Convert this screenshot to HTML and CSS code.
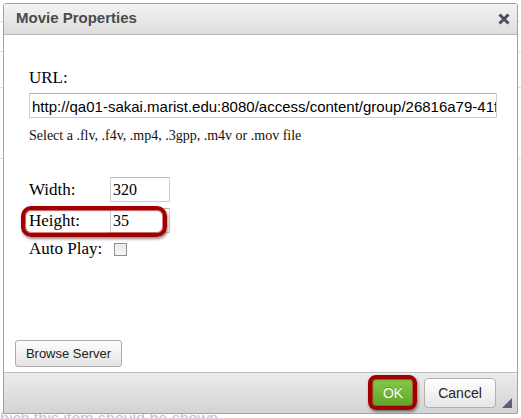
FILE: index.html
```html
<!DOCTYPE html>
<html>
<head>
<meta charset="utf-8">
<title>Movie Properties</title>
<link rel="stylesheet" href="styles.css">
</head>
<body>
<div class="page">
  <div class="backdrop">
    <div class="bg-row r1"></div>
    <div class="bg-row r2"></div>
    <div class="bg-row r3"></div>
    <div class="bg-row r4"></div>
    <div class="bg-text">hich this item should be shown</div>
  </div>

  <div class="dialog">
    <div class="dlg-head">
      <span class="dlg-title">Movie Properties</span>
      <svg class="dlg-close" width="12" height="12" viewBox="0 0 12 12"><path d="M1.5 1.5L10.5 10.5M10.5 1.5L1.5 10.5" stroke="#4e4e5e" stroke-width="3" stroke-linecap="butt"/></svg>
    </div>
    <div class="dlg-body">
      <div class="fields">
        <div class="url-label">URL:</div>
        <div class="url-input">http://qa01-sakai.marist.edu:8080/access/content/group/26816a79-41f9-4b2e-a0c1/movie.mp4</div>
        <div class="help">Select a .flv, .f4v, .mp4, .3gpp, .m4v or .mov file</div>
        <div class="dims">
          <div class="lbl">Width:</div>
          <div class="small-input">320</div>
          <div class="lbl">Height:</div>
          <div class="small-input">35</div>
          <div class="lbl lbl-short">Auto Play:</div>
          <div><span class="checkbox"></span></div>
        </div>
      </div>
      <button class="btn browse">Browse Server</button>
    </div>
    <div class="dlg-foot">
      <button class="btn ok">OK</button>
      <button class="btn cancel">Cancel</button>
      <svg class="grip" width="10" height="10" viewBox="0 0 10 10"><polygon points="10,0 10,10 0,10" fill="#5b5f78"/></svg>
    </div>
  </div>

  <div class="mark mark-height"></div>
  <div class="mark mark-ok"></div>
</div>
</body>
</html>
```

FILE: styles.css
```css
html, body {
  margin: 0;
  padding: 0;
  background: #fff;
}

.page {
  position: relative;
  width: 521px;
  height: 418px;
  overflow: hidden;
}

.backdrop {
  height: 418px;
  display: flex;
  flex-direction: column;
  overflow: hidden;
}

.bg-row {
  border-bottom: 1px solid #dedede;
}
.r1 { height: 21px; }
.r2 { height: 29px; }
.r3 { height: 35px; }
.r4 { height: 70px; }

.bg-text {
  margin-top: auto;
  margin-bottom: -10px;
  height: 18px;
  line-height: 18px;
  font-family: "Liberation Sans", Arial, sans-serif;
  font-size: 16px;
  color: #9fd0e6;
  white-space: nowrap;
}

.dialog {
  position: absolute;
  left: 3px;
  top: 3px;
  width: 515px;
  height: 411px;
  box-sizing: border-box;
  border: 1px solid #a3a3a3;
  border-radius: 3px 3px 0 0;
  background: #fff;
  display: flex;
  flex-direction: column;
}

.dlg-head {
  height: 31px;
  box-sizing: border-box;
  border-bottom: 1px solid #b9b9b9;
  background: linear-gradient(#f3f3f3, #dddddd);
  display: flex;
  align-items: center;
  justify-content: space-between;
  padding: 0 7px 2px 12px;
  border-radius: 2px 2px 0 0;
}

.dlg-title {
  font-family: "Liberation Sans", Arial, sans-serif;
  font-weight: bold;
  font-size: 15px;
  line-height: 28px;
  color: #4b4b4b;
}

.dlg-close {
  display: block;
  margin-top: 1px;
}

.dlg-body {
  flex: 1;
  display: flex;
  flex-direction: column;
  padding: 33px 20px 5px 11px;
}

.fields {
  padding-left: 14px;
}

.url-label {
  font-family: "Liberation Serif", "Times New Roman", serif;
  font-size: 17px;
  line-height: 20px;
  margin-bottom: 5px;
  color: #000;
}

.url-input {
  height: 25px;
  box-sizing: border-box;
  border: 1px solid #cdcdcd;
  border-top-color: #b4b4b4;
  padding: 2px 2px 0 2px;
  font-family: "Liberation Sans", Arial, sans-serif;
  font-size: 15px;
  line-height: 21px;
  color: #000;
  white-space: nowrap;
  overflow: hidden;
}

.help {
  margin-top: 10px;
  font-family: "Liberation Serif", "Times New Roman", serif;
  font-size: 14px;
  line-height: 16px;
  color: #111;
}

.dims {
  margin-top: 33px;
  display: grid;
  grid-template-columns: 81px auto;
  grid-template-rows: 25px 25px 20px;
  row-gap: 6px;
  justify-items: start;
}

.lbl {
  font-family: "Liberation Serif", "Times New Roman", serif;
  font-size: 17px;
  line-height: 25px;
  color: #000;
}

.lbl-short {
  line-height: 20px;
}

.small-input {
  width: 60px;
  height: 25px;
  box-sizing: border-box;
  border: 1px solid #d0d0d0;
  border-top-color: #bdbdbd;
  padding-left: 2px;
  font-family: "Liberation Serif", "Times New Roman", serif;
  font-size: 16px;
  line-height: 23px;
  color: #000;
}

.checkbox {
  display: block;
  width: 13px;
  height: 13px;
  box-sizing: border-box;
  margin: 4px 0 0 4px;
  border: 1px solid #8e8e8e;
  background: linear-gradient(#e6e6e6, #fafafa);
  box-shadow: inset 0 0 0 1px #f4f4f4;
}

.btn {
  box-sizing: border-box;
  font-family: "Liberation Sans", Arial, sans-serif;
  cursor: default;
  padding: 0;
}

.browse {
  margin-top: auto;
  align-self: flex-start;
  width: 107px;
  height: 27px;
  border: 1px solid #acacac;
  border-radius: 3px;
  background: linear-gradient(#fdfdfd, #e4e4e4);
  font-size: 13px;
  color: #222;
}

.dlg-foot {
  position: relative;
  height: 41px;
  box-sizing: border-box;
  border-top: 1px solid #bdbdbd;
  background: linear-gradient(#ececec, #d3d3d3);
  display: flex;
  align-items: center;
  justify-content: flex-end;
  gap: 10px;
  padding-right: 21px;
}

.ok {
  width: 42px;
  height: 30px;
  border: 1px solid #4c8c1e;
  border-radius: 3px;
  background: linear-gradient(#86c94a, #5da527);
  color: #fff;
  font-size: 14px;
  text-shadow: 0 -1px 0 rgba(0,0,0,0.25);
}

.cancel {
  width: 72px;
  height: 30px;
  border: 1px solid #b0b0b0;
  border-radius: 4px;
  background: linear-gradient(#ffffff, #e6e6e6);
  color: #222;
  font-size: 14px;
}

.grip {
  position: absolute;
  right: 5px;
  bottom: 5px;
  display: block;
}

.mark {
  position: absolute;
  box-sizing: border-box;
  border: 4px solid #a20000;
  box-shadow: 1px 2px 3px rgba(0,0,0,0.45), inset 0 0 0 1px rgba(200,40,40,0.6), inset 1px 1px 2px rgba(0,0,0,0.25);
}

.mark-height {
  left: 21px;
  top: 206px;
  width: 146px;
  height: 31px;
  border-radius: 10px;
}

.mark-ok {
  left: 368px;
  top: 375px;
  width: 49px;
  height: 35px;
  border-radius: 8px;
}
```
